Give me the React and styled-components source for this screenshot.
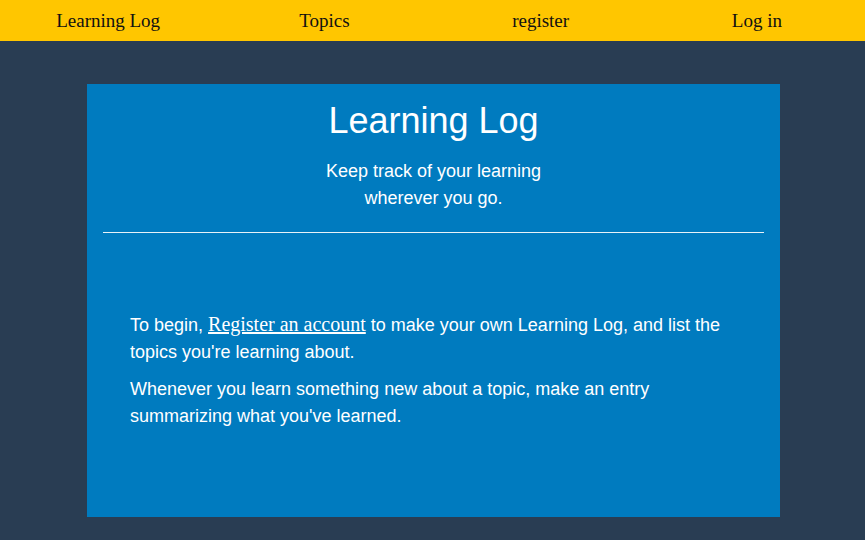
import React from "react";
import styled, { createGlobalStyle } from "styled-components";

const GlobalStyle = createGlobalStyle`
  html, body {
    margin: 0;
    padding: 0;
    background: #293d53;
    min-height: 100%;
  }
  body {
    font-family: "Liberation Sans", Arial, sans-serif;
  }
`;

export default function App() {
  return (
    <>
      <GlobalStyle />
      <Page>
        <Nav>
          <NavItem href="#">Learning Log</NavItem>
          <NavItem href="#">Topics</NavItem>
          <NavItem href="#">register</NavItem>
          <NavItem href="#">Log in</NavItem>
        </Nav>
        <Panel>
          <Header>
            <Title>Learning Log</Title>
            <Tagline>
              Keep track of your learning
              <br />
              wherever you go.
            </Tagline>
          </Header>
          <Rule />
          <Body>
            <Para>
              To begin, <TextLink href="#">Register an account</TextLink> to make
              your own Learning Log, and list the topics you're learning about.
            </Para>
            <Para>
              Whenever you learn something new about a topic, make an entry
              summarizing what you've learned.
            </Para>
          </Body>
        </Panel>
      </Page>
    </>
  );
}

const Page = styled.div`
  min-height: 540px;
  background: #293d53;
  padding-bottom: 23px;
`;

const Nav = styled.nav`
  height: 41px;
  background: #ffc600;
  display: flex;
  align-items: center;
`;

const NavItem = styled.a`
  flex: 1;
  text-align: center;
  font-family: "Liberation Serif", "Times New Roman", serif;
  font-size: 19px;
  color: #111;
  text-decoration: none;
`;

const Panel = styled.main`
  width: 693px;
  min-height: 433px;
  margin: 43px 0 0 87px;
  background: #007bbf;
  color: #fff;
  box-sizing: border-box;
  padding: 0 16px;
`;

const Header = styled.header`
  text-align: center;
  padding-top: 16px;
`;

const Title = styled.h1`
  margin: 0;
  font-size: 36px;
  font-weight: normal;
  line-height: 42px;
`;

const Tagline = styled.p`
  margin: 16px 0 0;
  font-size: 18px;
  line-height: 27px;
`;

const Rule = styled.hr`
  margin: 20px 0 0;
  border: none;
  border-top: 1px solid #e8f2f8;
`;

const Body = styled.section`
  padding: 79px 24px 40px 27px;
`;

const Para = styled.p`
  margin: 0 0 10px;
  font-size: 18px;
  line-height: 27px;
`;

const TextLink = styled.a`
  font-family: "Liberation Serif", "Times New Roman", serif;
  font-size: 20px;
  line-height: 1;
  color: #fff;
  text-decoration: underline;
`;
